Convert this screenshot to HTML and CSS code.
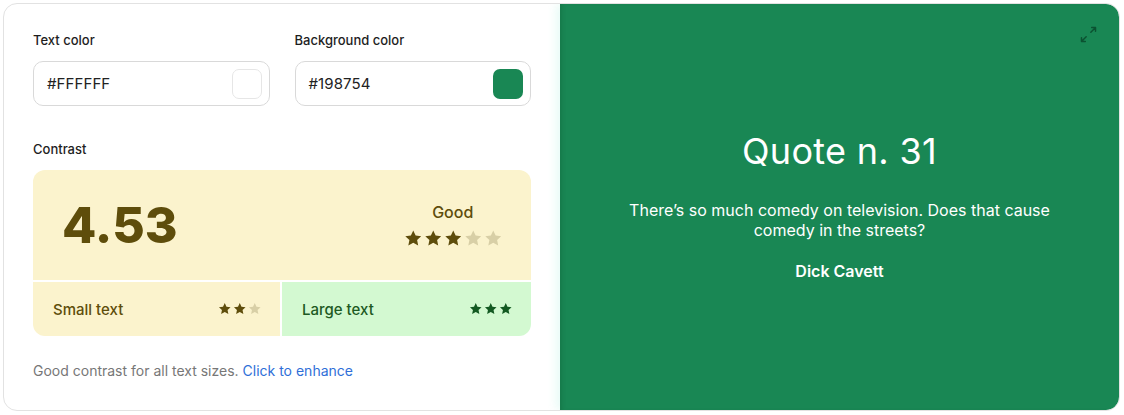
FILE: index.html
```html
<!DOCTYPE html>
<html>
<head>
<meta charset="utf-8">
<link rel="stylesheet" href="styles.css">
</head>
<body>
<svg width="0" height="0" class="defs">
  <defs>
    <symbol id="star" viewBox="0 0 24 24"><path d="M12 1.8l3.1 6.6 7.2.9-5.3 5 1.4 7.1L12 17.9l-6.4 3.5 1.4-7.1-5.3-5 7.2-.9z"/></symbol>
  </defs>
</svg>
<div class="card">
  <section class="controls">
    <div class="pickers">
      <div class="field">
        <div class="label">Text color</div>
        <div class="input">
          <span class="value">#FFFFFF</span>
          <span class="swatch swatch-white"></span>
        </div>
      </div>
      <div class="field">
        <div class="label">Background color</div>
        <div class="input">
          <span class="value">#198754</span>
          <span class="swatch swatch-green"></span>
        </div>
      </div>
    </div>
    <div class="label contrast-label">Contrast</div>
    <div class="contrast">
      <div class="score">
        <div class="ratio">4.53</div>
        <div class="rating">
          <div class="rating-word">Good</div>
          <div class="stars big">
            <svg class="on"><use href="#star"/></svg>
            <svg class="on"><use href="#star"/></svg>
            <svg class="on"><use href="#star"/></svg>
            <svg class="off"><use href="#star"/></svg>
            <svg class="off"><use href="#star"/></svg>
          </div>
        </div>
      </div>
      <div class="sizes">
        <div class="size size-small">
          <span>Small text</span>
          <div class="stars small">
            <svg class="on"><use href="#star"/></svg>
            <svg class="on"><use href="#star"/></svg>
            <svg class="off"><use href="#star"/></svg>
          </div>
        </div>
        <div class="size size-large">
          <span>Large text</span>
          <div class="stars small">
            <svg class="on"><use href="#star"/></svg>
            <svg class="on"><use href="#star"/></svg>
            <svg class="on"><use href="#star"/></svg>
          </div>
        </div>
      </div>
    </div>
    <p class="note">Good contrast for all text sizes. <a class="enhance">Click to enhance</a></p>
  </section>
  <section class="preview">
    <svg class="expand" viewBox="0 0 16 16" fill="none" stroke="currentColor" stroke-width="1.4" stroke-linecap="round" stroke-linejoin="round">
      <path d="M10.2 5.8L14.6 1.4M11 1.4h3.6v3.6"/>
      <path d="M5.8 10.2L1.4 14.6M1.4 11v3.6h3.6"/>
    </svg>
    <h1 class="title">Quote n. 31</h1>
    <p class="quote">There’s so much comedy on television. Does that cause comedy in the streets?</p>
    <p class="author">Dick Cavett</p>
  </section>
</div>
</body>
</html>
```
FILE: styles.css
```css
* { box-sizing: border-box; }
html, body { margin: 0; padding: 0; background: #ffffff; }
body {
  font-family: Inter, "Noto Sans", "Liberation Sans", sans-serif;
  color: #1c1c1c;
  padding: 3px 4px 4px 3px;
}
.defs { position: absolute; }
.card {
  height: 408px;
  border: 1px solid #e2e2e2;
  border-radius: 14px;
  display: grid;
  grid-template-columns: 556px 1fr;
  overflow: hidden;
  background: #fff;
}
.controls {
  padding: 28px 29px 0 29px;
}
.pickers {
  display: grid;
  grid-template-columns: 1fr 1fr;
  column-gap: 25px;
}
.label {
  font-size: 13px;
  font-weight: 500;
  line-height: 16px;
  color: #1e1e1e;
  margin-bottom: 13px;
}
.input {
  height: 45px;
  border: 1px solid #d9d9d9;
  border-radius: 10px;
  display: flex;
  align-items: center;
  justify-content: space-between;
  padding: 0 7px 0 13px;
}
.value {
  font-size: 15px;
  color: #222;
  letter-spacing: 0.1px;
}
.swatch {
  width: 30px;
  height: 30px;
  border-radius: 7px;
}
.swatch-white { background: #fff; border: 1px solid #e6e6e6; }
.swatch-green { background: #198754; }
.contrast-label { margin-top: 35px; }
.contrast {
  border-radius: 12px;
  overflow: hidden;
  display: flex;
  flex-direction: column;
  gap: 2px;
}
.score {
  height: 110px;
  background: #fbf3cd;
  display: flex;
  align-items: center;
  justify-content: space-between;
  padding: 0 29px 0 29px;
  color: #5e4d0b;
}
.ratio {
  font-size: 50px;
  font-weight: 800;
  letter-spacing: 0;
  margin-top: 0;
}
.rating {
  display: flex;
  flex-direction: column;
  align-items: center;
  gap: 7px;
  margin-top: 0;
}
.rating-word { font-size: 16px; font-weight: 500; line-height: 20px; }
.stars { display: flex; }
.stars.big { gap: 1.5px; }
.stars.big svg { width: 18.5px; height: 18.5px; }
.stars.small { gap: 1.5px; }
.stars.small svg { width: 13.5px; height: 13.5px; }
.score .on, .size-small .on { fill: #5e4d0b; }
.score .off, .size-small .off { fill: #d8cfa6; }
.sizes {
  display: grid;
  grid-template-columns: 247px 1fr;
  gap: 2px;
}
.size {
  height: 54px;
  display: flex;
  align-items: center;
  justify-content: space-between;
  padding: 0 19px 0 20px;
  font-size: 15px;
  font-weight: 500;
}
.size-small { background: #fbf3cd; color: #5e4d0b; }
.size-large { background: #d3f9d1; color: #1d5a23; }
.size-large .on { fill: #135a22; }
.note {
  margin: 25px 0 0 0;
  font-size: 14px;
  line-height: 20px;
  color: #777777;
}
.enhance { color: #2f6fd8; cursor: pointer; }
.preview {
  position: relative;
  background: #198754;
  color: #ffffff;
  display: flex;
  flex-direction: column;
  align-items: center;
  justify-content: center;
  text-align: center;
  padding: 0 60px 4px 60px;
  border-radius: 0 13px 13px 0;
  box-shadow: -4px 0 10px rgba(60, 220, 180, 0.12), inset 4px 0 4px -2px rgba(0, 40, 20, 0.15);
}
.expand {
  position: absolute;
  top: 22px;
  right: 22px;
  width: 17px;
  height: 17px;
  color: #0b5231;
}
.title {
  margin: 0;
  font-size: 36px;
  font-weight: 400;
  line-height: 44px;
  letter-spacing: 0.3px;
}
.quote {
  margin: 27px 0 0 0;
  font-size: 16px;
  line-height: 20px;
  max-width: 440px;
}
.author {
  margin: 21px 0 0 0;
  font-size: 16px;
  font-weight: 600;
  line-height: 20px;
}
```
